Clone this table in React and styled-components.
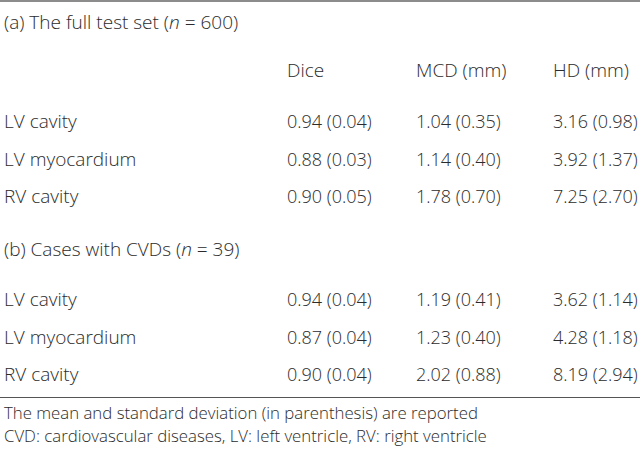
import styled, { createGlobalStyle } from "styled-components";

const GlobalStyle = createGlobalStyle`
  html, body {
    margin: 0;
    padding: 0;
    background: #ffffff;
  }
`;

const sections = [
  {
    label: "(a) The full test set",
    n: 600,
    rows: [
      ["LV cavity", "0.94 (0.04)", "1.04 (0.35)", "3.16 (0.98)"],
      ["LV myocardium", "0.88 (0.03)", "1.14 (0.40)", "3.92 (1.37)"],
      ["RV cavity", "0.90 (0.05)", "1.78 (0.70)", "7.25 (2.70)"],
    ],
  },
  {
    label: "(b) Cases with CVDs",
    n: 39,
    rows: [
      ["LV cavity", "0.94 (0.04)", "1.19 (0.41)", "3.62 (1.14)"],
      ["LV myocardium", "0.87 (0.04)", "1.23 (0.40)", "4.28 (1.18)"],
      ["RV cavity", "0.90 (0.04)", "2.02 (0.88)", "8.19 (2.94)"],
    ],
  },
];

const App = () => {
  return (
    <>
      <GlobalStyle />
      <Wrapper>
        {sections.map((section, i) => (
          <Section key={section.label}>
            <SectionTitle $first={i === 0}>
              {section.label} (<Italic>n</Italic> = {section.n})
            </SectionTitle>
            {i === 0 && (
              <Row $gap={10}>
                <Cell />
                <Cell>Dice</Cell>
                <Cell>MCD (mm)</Cell>
                <Cell>HD (mm)</Cell>
              </Row>
            )}
            {section.rows.map(([label, ...values], j) => (
              <Row key={label} $gap={j === 0 ? (i === 0 ? 14 : 13) : 0}>
                <Cell>{label}</Cell>
                {values.map((value, k) => (
                  <Cell key={k} $numeric>
                    {value}
                  </Cell>
                ))}
              </Row>
            ))}
          </Section>
        ))}
        <Footnotes>
          <Note>The mean and standard deviation (in parenthesis) are reported</Note>
          <Note>CVD: cardiovascular diseases, LV: left ventricle, RV: right ventricle</Note>
        </Footnotes>
      </Wrapper>
    </>
  );
};

const Wrapper = styled.div`
  width: 640px;
  height: 450px;
  overflow: hidden;
  border-top: 2px solid #8c8c8c;
  box-sizing: border-box;
  font-family: "Open Sans", "Noto Sans", sans-serif;
  font-weight: 300;
  font-size: 19px;
  color: #2b2b2b;
`;

const Section = styled.div`
  display: flex;
  flex-direction: column;
`;

const SectionTitle = styled.div`
  height: 38px;
  line-height: 38px;
  padding-left: 4px;
  margin-top: ${(p) => (p.$first ? "1px" : "14.5px")};
`;

const Italic = styled.i`
  font-style: italic;
`;

const Row = styled.div`
  display: grid;
  grid-template-columns: 283px 129px 137px 1fr;
  height: 37.5px;
  align-items: center;
  padding-left: 4px;
  margin-top: ${(p) => p.$gap}px;
`;

const Cell = styled.div`
  white-space: nowrap;
  font-size: ${(p) => (p.$numeric ? "18px" : "inherit")};
`;

const Footnotes = styled.div`
  margin-top: 4px;
  border-top: 1px solid #555555;
  padding: 3px 0 0 4px;
`;

const Note = styled.div`
  font-size: 16.8px;
  line-height: 23px;
  white-space: nowrap;
`;

export default App;
